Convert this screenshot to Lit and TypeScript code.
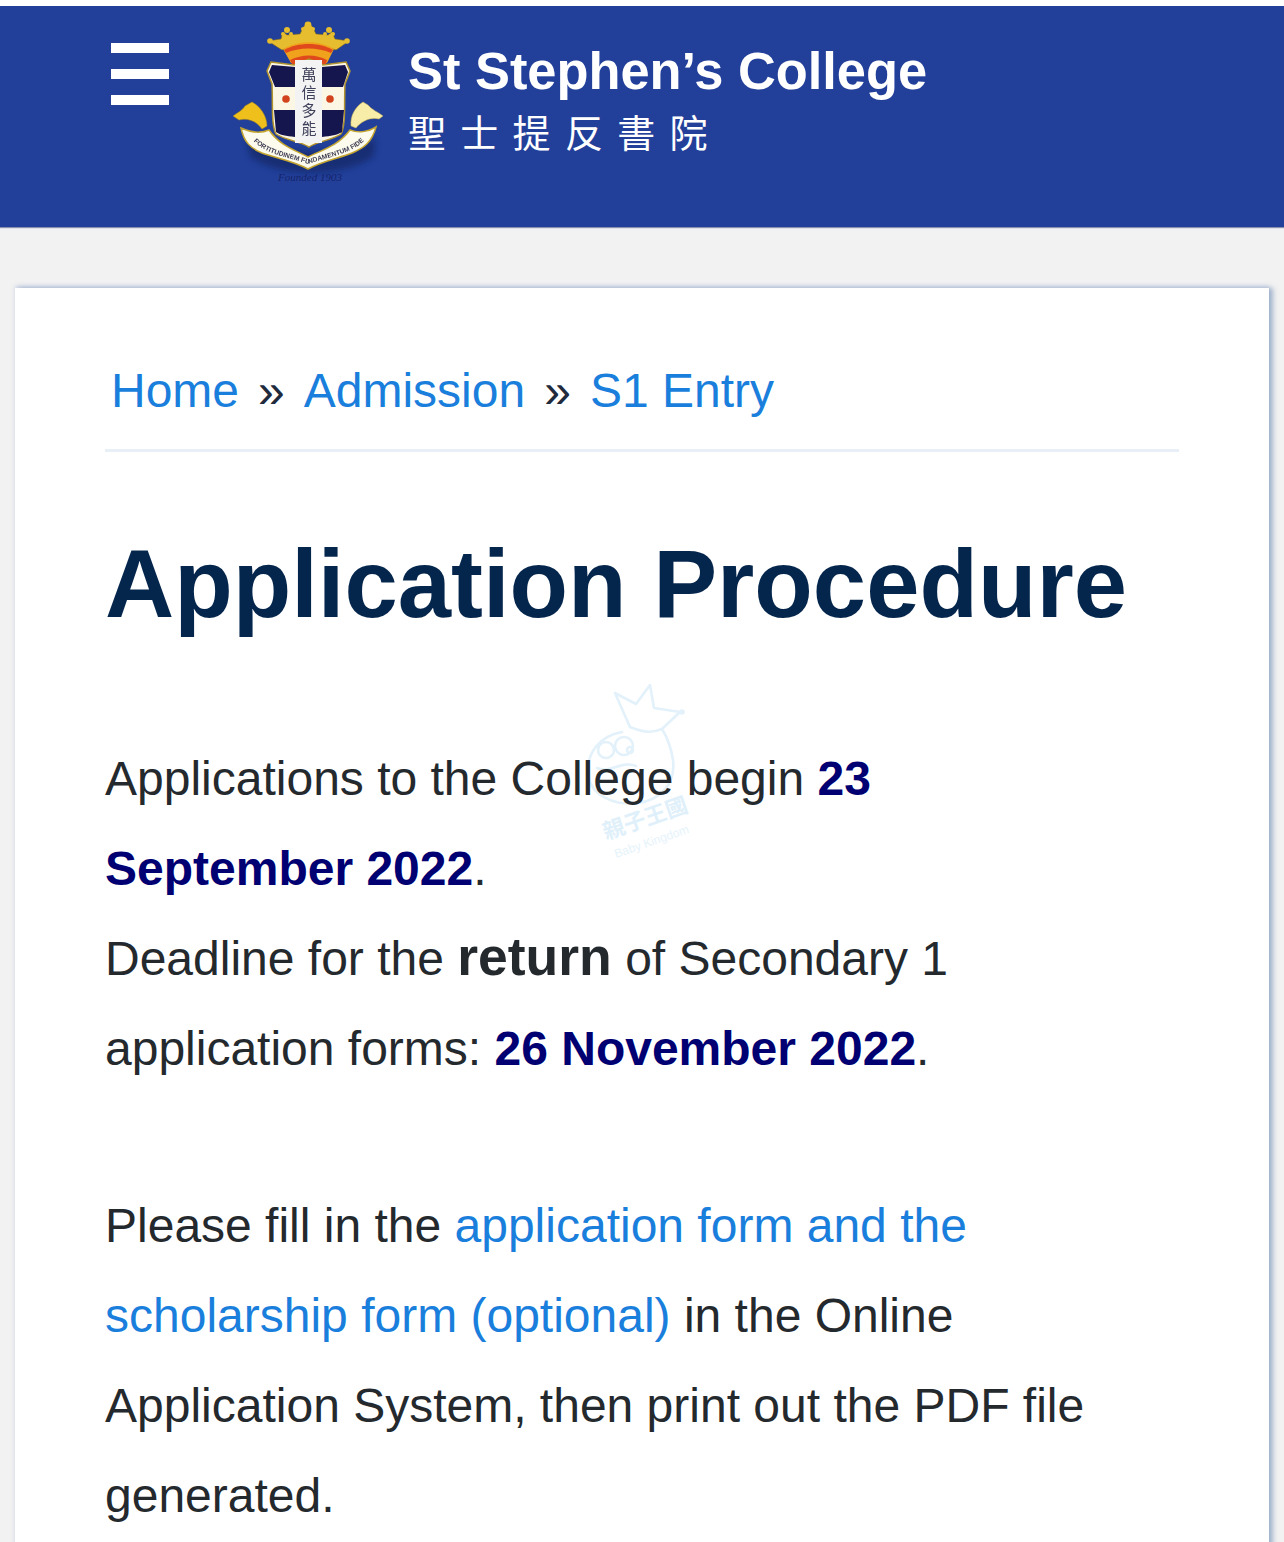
import { LitElement, html, css, svg } from "lit";
import { customElement } from "lit/decorators.js";

/* Drawn in page coordinates: the viewBox matches where the crest sits. */
const crest = svg`
<svg class="crest" viewBox="233 20 150 166" width="150" height="166" aria-hidden="true">
  <defs>
    <filter id="soft" x="-20%" y="-20%" width="140%" height="140%"><feGaussianBlur stdDeviation="0.45"/></filter>
    <filter id="shadow" x="-20%" y="-20%" width="140%" height="140%"><feGaussianBlur stdDeviation="3"/></filter>
  </defs>
  <path d="M244 132 C275 150 342 150 374 132 L372 150 C345 172 272 172 248 150 Z" fill="#0c1a50" opacity=".5" filter="url(#shadow)" transform="translate(2 6)"/>
  <text x="310" y="181" text-anchor="middle" class="founded">Founded 1903</text>
  <g filter="url(#soft)">
    <g fill="#e6bd2e">
      <path d="M268 41 L281 39 L283 32 L287 35 L300 34 L304 26 L308 24 L312 26 L316 34 L328 35 L332 32 L335 39 L349 41 L336 50 C320 43 296 43 282 50 Z" stroke="#86690f" stroke-width=".5"/>
      <circle cx="308" cy="25" r="3.4"/><circle cx="303" cy="29" r="2"/><circle cx="313" cy="29" r="2"/>
      <circle cx="287" cy="30" r="3"/><circle cx="283" cy="34" r="2"/><circle cx="291" cy="34" r="2"/>
      <circle cx="329" cy="30" r="3"/><circle cx="325" cy="34" r="2"/><circle cx="333" cy="34" r="2"/>
      <circle cx="270" cy="41" r="2.8"/><circle cx="347" cy="41" r="2.8"/>
    </g>
    <path d="M283 49 C298 40 320 40 334 49 L327 63 L291 63 Z" fill="#f0a21e"/>
    <path d="M284 50 C298 42 320 42 333 50 L331 53 C318 47 299 47 286 53 Z" fill="#e04a1b"/>
    <path d="M290 60 C302 54 316 54 327 60 L326 64 L292 64 Z" fill="#e04a1b"/>
    <path d="M271 62 L294 65 L309 59 L323 65 L346 62 L350 71 L345 84 C344 105 346 124 341 134 C333 140 318 141 309 147 C299 141 285 140 276 134 C271 124 273 105 272 84 L267 71 Z" fill="#fbf7e4" stroke="#b2942f" stroke-width="1.5"/>
    <path d="M272 65 L295 67 L295 87 L275 87 L269 72 Z" fill="#17124f"/>
    <path d="M322 67 L345 65 L348 72 L343 87 L322 87 Z" fill="#17124f"/>
    <path d="M274 110 L295 110 L295 137 C286 136 280 135 276 132 Z" fill="#17124f"/>
    <path d="M322 110 L344 110 L342 132 C337 135 331 136 322 137 Z" fill="#17124f"/>
    <rect x="295" y="60" width="27" height="83" fill="#f4f3f4"/>
    <circle cx="286" cy="99" r="3.8" fill="#d2431f"/>
    <circle cx="330" cy="99" r="3.8" fill="#d2431f"/>
    <text class="seal" x="309" y="80"><tspan x="309">萬</tspan><tspan x="309" dy="18">信</tspan><tspan x="309" dy="18">多</tspan><tspan x="309" dy="18">能</tspan></text>
    <path d="M233 116 C238 112 242 111 245 106 L252 102 C260 106 267 116 267 126 L262 129 C256 120 246 118 239 120 Z" fill="#efc01e" stroke="#a88717" stroke-width=".5"/>
    <path d="M383 116 C378 112 372 110 368 105 L363 102 C355 107 350 116 351 126 L356 128 C362 120 372 117 379 119 Z" fill="#f7eda8" stroke="#c7b04a" stroke-width=".5"/>
    <path d="M241 128 C252 133 262 133 269 130 C280 146 295 150 308 157 C322 150 338 146 350 130 C358 133 368 132 376 127 C372 142 364 148 352 153 C340 158 322 161 308 169 C294 161 276 158 262 153 C250 148 244 142 241 128 Z" fill="#fdfbee" stroke="#c4a532" stroke-width="1.5"/>
    <path id="ribbon" d="M248 133 C257 153 285 156 308 164 C331 156 359 153 370 133" fill="none"/>
    <text class="motto"><textPath href="#ribbon" startOffset="50%" text-anchor="middle">FORTITUDINEM FUNDAMENTUM FIDE</textPath></text>
  </g>
</svg>`;

const mascot = svg`
<svg class="mark" viewBox="580 680 130 185" width="130" height="185" aria-hidden="true">
  <g fill="none" stroke="#e3f1fa" stroke-width="2.6" stroke-linejoin="round" stroke-linecap="round">
    <path d="M630 727 L615 693 L636 704 L650 685 L654 708 L680 712 L662 729"/>
    <path d="M630 727 C645 733 652 733 662 729"/>
    <path d="M622 732 C600 736 586 752 588 776 C592 796 615 806 638 803 C660 800 676 784 673 760 C671 747 667 737 662 729"/>
    <circle cx="606" cy="750" r="8"/><circle cx="624" cy="746" r="9"/><circle cx="630" cy="750" r="3"/>
    <path d="M597 768 C610 774 622 760 636 766"/>
    <circle cx="682" cy="712" r="1.5"/>
  </g>
  <text x="606" y="840" class="wm-zh" transform="rotate(-19 606 840)">親子王國</text>
  <text x="616" y="858" class="wm-en" transform="rotate(-19 616 858)">Baby Kingdom</text>
</svg>`;

@customElement("app-root")
export class AppRoot extends LitElement {
  static styles = css`
    :host { display: block; width: 1284px; height: 1542px; overflow: hidden; background: #f2f2f2; font-family: "Liberation Sans", Arial, sans-serif; }
    .strip { height: 6px; background: #fff; }
    header { height: 221px; background: #22409a; display: flex; align-items: flex-start; box-shadow: 0 1px 1px rgba(30,50,110,.5); }
    .burger { width: 58px; margin: 37px 0 0 111px; display: flex; flex-direction: column; gap: 16px; flex: none; }
    .burger span { height: 10px; background: #fff; }
    .crest { margin: 14px 0 0 64px; flex: none; }
    .founded { font: italic 11px "Liberation Serif", serif; fill: #16246a; }
    .motto { font: 700 6.6px "Liberation Sans", sans-serif; fill: #3c3a50; }
    .seal { font: 400 15px "Noto Sans CJK TC", sans-serif; fill: #3d3f58; text-anchor: middle; }
    .brand { margin: 34px 0 0 25px; color: #fff; }
    .en { font-size: 52.4px; font-weight: 700; line-height: 62px; white-space: nowrap; }
    .zh { font: 400 38px/46px "Noto Sans CJK TC", sans-serif; letter-spacing: 14.3px; margin-top: 6px; white-space: nowrap; }
    main { position: relative; box-sizing: border-box; width: 1254px; margin: 61px 0 0 15px; padding: 55px 90px 0; height: 1300px; background: #fff; box-shadow: 4px 0 5px rgba(130,155,190,.7), 0 -2px 4px rgba(150,170,215,.35); }
    .body { position: relative; z-index: 1; }
    nav { height: 109px; box-sizing: border-box; border-bottom: 3px solid #e9eff6; padding: 19px 0 0 6px; font-size: 48px; line-height: 57px; color: #1f2b3c; white-space: nowrap; }
    nav i { font-style: normal; margin: 0 19px; }
    a { color: #1a7fdc; text-decoration: none; }
    h1 { margin: 72px 0 0; font-size: 95.8px; line-height: 120px; font-weight: 700; color: #05264c; white-space: nowrap; }
    p { margin: 0; font-size: 48px; line-height: 90px; color: #24292e; white-space: nowrap; }
    .first { margin-top: 90px; }
    .second { margin-top: 87px; }
    b.d { color: #000072; font-weight: 700; }
    b.r { font-size: 53.5px; font-weight: 700; line-height: 1; }
    .mark { position: absolute; left: 565px; top: 392px; pointer-events: none; }
    .wm-zh { font: 700 22px "Noto Sans CJK TC", sans-serif; fill: #e0f0fa; }
    .wm-en { font: 400 12px "Liberation Sans", sans-serif; fill: #e6f3fb; }
  `;

  render() {
    return html`
      <div class="strip"></div>
      <header>
        <div class="burger"><span></span><span></span><span></span></div>
        ${crest}
        <div class="brand">
          <div class="en">St Stephen’s College</div>
          <div class="zh">聖士提反書院</div>
        </div>
      </header>
      <main>
        ${mascot}
        <div class="body">
          <nav><a>Home</a><i>»</i><a>Admission</a><i>»</i><a>S1 Entry</a></nav>
          <h1>Application Procedure</h1>
          <p class="first">Applications to the College begin <b class="d">23</b><br>
          <b class="d">September 2022</b>.<br>
          Deadline for the <b class="r">return</b> of Secondary 1<br>
          application forms: <b class="d">26 November 2022</b>.</p>
          <p class="second">Please fill in the <a>application form and the</a><br>
          <a>scholarship form (optional)</a> in the Online<br>
          Application System, then print out the PDF file<br>
          generated.</p>
        </div>
      </main>
    `;
  }
}
